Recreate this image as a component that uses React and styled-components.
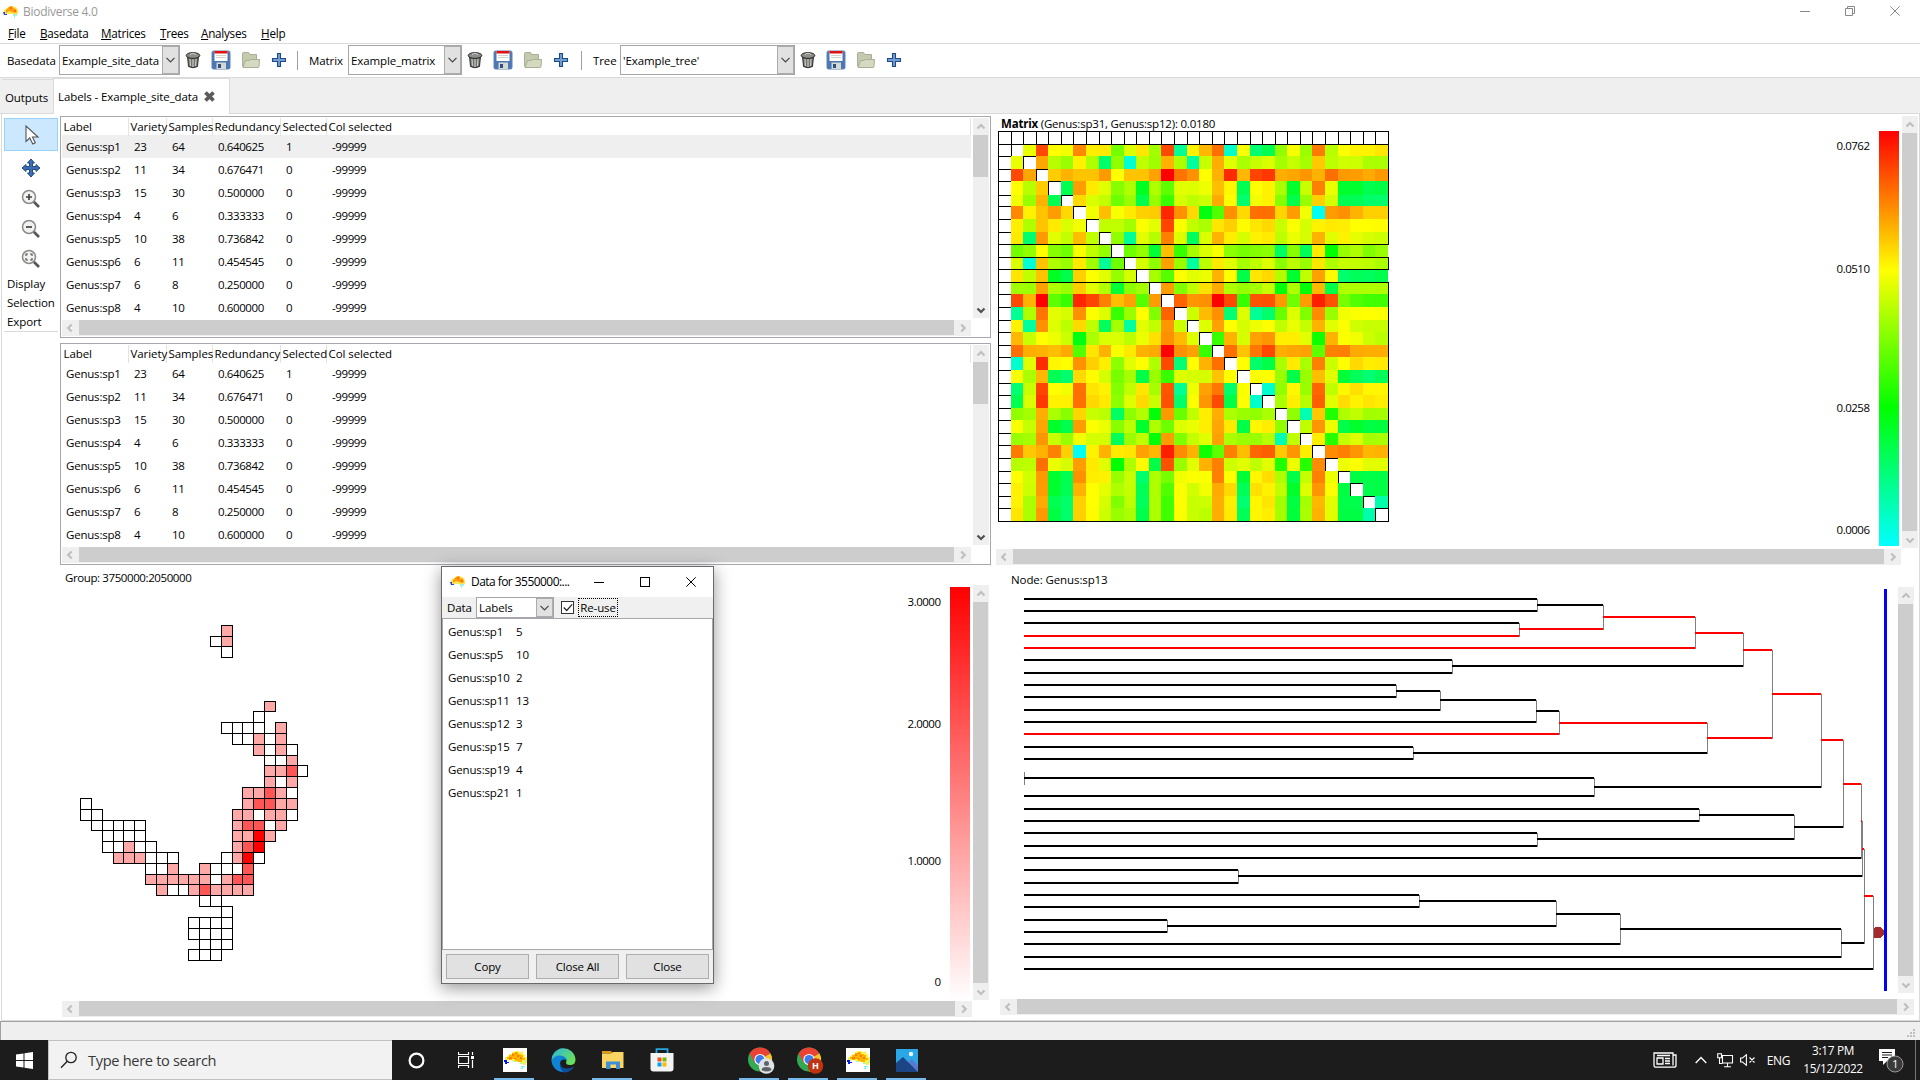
import React from "react";
import styled, { createGlobalStyle, css } from "styled-components";

const Global = createGlobalStyle`
  * { box-sizing: border-box; }
  html, body { margin: 0; padding: 0; background: #fff; overflow: hidden; }
  body, svg text {
    font-family: "Open Sans", "Noto Sans", sans-serif;
    font-size: 11.5px;
    letter-spacing: -0.1px;
    color: #000;
  }
  svg { display: block; flex: none; }
  svg text { letter-spacing: -0.5px; }
`;

/* ---------- data ---------- */

const SPECIES = [
  ["Genus:sp1", "23", "64", "0.640625", "1"],
  ["Genus:sp2", "11", "34", "0.676471", "0"],
  ["Genus:sp3", "15", "30", "0.500000", "0"],
  ["Genus:sp4", "4", "6", "0.333333", "0"],
  ["Genus:sp5", "10", "38", "0.736842", "0"],
  ["Genus:sp6", "6", "11", "0.454545", "0"],
  ["Genus:sp7", "6", "8", "0.250000", "0"],
  ["Genus:sp8", "4", "10", "0.600000", "0"],
].map((r) => [...r, "-99999"]);

const COLUMNS = ["Label", "Variety", "Samples", "Redundancy", "Selected", "Col selected"];

const GROUP_DATA = [
  ["Genus:sp1", 5], ["Genus:sp5", 10], ["Genus:sp10", 2], ["Genus:sp11", 13],
  ["Genus:sp12", 3], ["Genus:sp15", 7], ["Genus:sp19", 4], ["Genus:sp21", 1],
];

/* Upper triangle of the symmetric matrix; each value is a hue in degrees. */
const MATRIX = [
  "65 17 60 63 32 56 55 93 69 54 82 17 155 57 43 26 168 62 147 139 86 62 84 29 77 61 57 57 54",
  "39 77 84 57 79 146 86 170 75 83 42 79 158 73 41 67 80 73 69 81 74 81 47 76 71 72 80 80",
  "48 42 46 46 36 60 46 46 38 0 27 34 60 42 10 43 16 13 41 39 35 42 26 36 37 40 36",
  "139 37 55 67 88 79 128 79 98 67 68 64 45 58 140 60 57 80 130 73 30 65 131 131 139 136",
  "51 69 74 94 84 138 84 107 70 76 72 40 60 146 63 57 88 138 84 49 70 139 140 145 145",
  "63 45 62 55 49 48 9 34 51 124 101 34 51 26 26 50 37 63 177 37 34 42 49 49",
  "75 75 82 61 67 16 61 75 80 54 49 59 54 51 73 61 70 57 55 56 60 60 59",
  "86 156 67 78 30 68 142 69 42 56 70 57 55 76 65 70 42 67 57 66 70 72",
  "94 85 133 45 107 81 69 62 87 92 89 87 143 88 141 55 120 84 79 90 84",
  "70 87 38 84 158 76 55 67 81 75 68 87 76 84 54 79 73 74 76 80",
  "81 100 60 67 65 42 60 137 54 51 78 131 75 38 59 146 141 142 138",
  "37 90 75 53 40 79 84 81 73 122 79 122 43 137 79 79 79 79",
  "23 35 34 0 17 107 20 19 36 94 37 7 19 92 101 105 105",
  "72 44 34 148 68 155 145 95 68 90 33 84 63 61 60 61",
  "68 38 60 70 64 61 75 65 74 42 67 61 71 73 73",
  "107 42 70 38 35 56 56 67 117 42 61 63 72 76",
  "26 46 28 17 41 39 38 98 30 30 40 41 41",
  "60 145 137 80 55 80 30 72 60 51 56 55",
  "61 60 84 137 84 45 67 133 141 147 141",
  "168 86 58 84 24 75 58 53 58 58",
  "80 56 77 22 67 52 57 54 56",
  "86 162 47 113 79 75 82 81",
  "75 35 64 137 130 136 134",
  "56 111 74 68 81 80",
  "33 30 35 43 42",
  "64 61 67 67",
  "136 137 136",
  "138 136",
  "160",
].map((r) => r.split(" ").map(Number));

const hueAt = (r, c) => {
  const a = Math.min(r, c);
  const b = Math.max(r, c);
  return MATRIX[a - 1][b - a - 1];
};

/* Cell edges of the 31 x 31 grid, in thirds of a pixel from the canvas corner. */
const EDGES = [24, 63, 99, 138, 174, 214, 249, 288, 327, 363, 402, 438, 477, 513, 552, 591, 627, 666, 702, 741, 780, 816, 855, 891, 930, 966, 1005, 1044, 1080, 1119, 1155, 1194];
const MX = EDGES.map((v) => Math.round(990 + v / 3));
const MY = EDGES.map((v) => Math.round(123.3 + v / 3));

const MAP_X = [80, 91, 102, 113, 123, 134, 145, 156, 167, 178, 188, 199, 210, 221, 232, 242, 253, 264, 275, 286, 297, 307];
const MAP_Y = { 0: 625, 1: 636, 2: 646, 7: 701, 8: 711, 9: 722, 10: 733, 11: 744, 12: 755, 13: 765, 14: 776, 15: 787, 16: 798, 17: 809, 18: 820, 19: 830, 20: 841, 21: 852, 22: 863, 23: 874, 24: 884, 25: 895, 26: 906, 27: 917, 28: 928, 29: 939, 30: 949 };
/* row: "startColumn:cells"; w = 0, p = 1, r = 2, R = 3 shared labels */
const MAP_ROWS = {
  0: ["13:p"], 1: ["12:wp"], 2: ["13:w"], 7: ["17:p"], 8: ["16:w"],
  9: ["13:wwww", "18:p"], 10: ["14:wwpwp"], 11: ["16:pwpw"], 12: ["17:wwp"],
  13: ["17:pprw"], 14: ["17:pwp"], 15: ["15:pprpw"], 16: ["0:w", "15:prrpp"],
  17: ["0:ww", "14:ppwppw"], 18: ["1:wwwww", "14:prrwp"], 19: ["2:wwww", "14:ppRp"],
  20: ["2:wwpww", "14:prR"], 21: ["3:pppwww", "13:wpRw"], 22: ["6:wwp", "11:pwwwr"],
  23: ["6:ppppppwprr"], 24: ["7:pwwprpppp"], 25: ["11:ww"], 26: ["13:w"],
  27: ["10:wwww"], 28: ["10:wwww"], 29: ["11:www"], 30: ["10:www"],
};
const MAP_FILL = { w: "#fff", p: "#ffa8a8", r: "#ff5555", R: "#ff0000" };

/* Tree branches: [x from, x to, y, is highlighted] */
const L = (z) => 1000 + z / 3;
const R = (z) => 1440 + z / 3;
const LEAF = 1024;
const BRANCHES = [
  [LEAF, R(292), 117], [LEAF, R(292), 153], [LEAF, R(238), 189], [LEAF, R(238), 228, 1],
  [LEAF, R(766), 264, 1], [LEAF, R(37), 300], [LEAF, R(37), 339], [LEAF, L(1189), 375],
  [LEAF, L(1189), 411], [LEAF, L(1321), 450], [LEAF, R(289), 486], [LEAF, R(358), 522, 1],
  [LEAF, L(1240), 561], [LEAF, L(1240), 597], [LEAF, R(463), 654], [LEAF, R(463), 708],
  [LEAF, R(778), 747], [LEAF, R(778), 783], [LEAF, R(292), 819], [LEAF, R(292), 858],
  [LEAF, R(1264), 894], [LEAF, L(715), 930], [LEAF, L(715), 969], [LEAF, L(1258), 1005],
  [LEAF, L(1258), 1041], [LEAF, L(502), 1080], [LEAF, L(502), 1116], [LEAF, R(541), 1152],
  [LEAF, R(1204), 1191], [LEAF, R(1300), 1227],
  [R(292), R(490), 135], [R(238), R(490), 207, 1], [R(490), R(766), 171, 1],
  [R(766), R(910), 219, 1], [R(37), R(910), 318], [R(910), R(997), 270, 1],
  [L(1189), L(1321), 393], [L(1321), R(289), 420], [R(289), R(358), 453],
  [R(358), R(802), 489, 1], [L(1240), R(802), 579], [R(802), R(997), 534, 1],
  [R(997), R(1144), 402, 1], [R(463), R(1144), 681], [R(1144), R(1210), 540, 1],
  [R(778), R(1063), 765], [R(292), R(1063), 837], [R(1063), R(1210), 801],
  [R(1210), R(1264), 672, 1], [R(1264), R(1267), 783, 1], [L(715), R(1267), 948],
  [R(1267), R(1273), 867, 1], [L(1258), R(349), 1023], [L(502), R(349), 1098],
  [R(349), R(541), 1062], [R(541), R(1204), 1107], [R(1204), R(1273), 1149],
  [R(1273), R(1300), 1008, 1],
];
const JOINTS = [
  [R(292), 117, 153], [R(238), 189, 228], [R(490), 135, 207], [R(766), 171, 264],
  [R(37), 300, 339], [R(910), 219, 318], [L(1189), 375, 411], [L(1321), 393, 450],
  [R(289), 420, 486], [R(358), 453, 522], [L(1240), 561, 597], [R(802), 489, 579],
  [R(997), 270, 534], [LEAF + 0.3, 636, 672], [R(463), 654, 708], [R(1144), 402, 681],
  [R(778), 747, 783], [R(292), 819, 858], [R(1063), 765, 837], [R(1210), 540, 801],
  [R(1264), 672, 894], [L(715), 930, 969], [R(1267), 783, 948], [L(1258), 1005, 1041],
  [L(502), 1080, 1116], [R(349), 1023, 1098], [R(541), 1062, 1152],
  [R(1204), 1107, 1191], [R(1273), 867, 1149], [R(1300), 1008, 1227],
];

/* ---------- shell ---------- */

const Desktop = styled.div`
  width: 1920px; height: 1080px; display: flex; flex-direction: column;
  background: #fff; overflow: hidden; position: relative; white-space: nowrap;
`;
const TitleBar = styled.header`
  height: 23px; display: flex; align-items: center; padding: 0 0 0 2px; color: #999;
  font-size: 12px; letter-spacing: -0.28px;
`;
const AppTitle = styled.span`flex: 1; padding-left: 4px; line-height: 16px;`;
const WindowButtons = styled.div`display: flex; gap: 35px; padding: 0 20px 2px 0; align-items: center;`;
const MenuBar = styled.nav`
  height: 21px; border-bottom: 1px solid #dadada; display: flex; align-items: center;
  padding: 1px 0 0 8px; font-size: 11.7px; letter-spacing: -0.25px;
`;
const MenuItem = styled.span`
  width: ${(p) => p.$w}px; line-height: 17px;
  &::first-letter { text-decoration: underline; }
`;
const ToolBar = styled.div`
  height: 34px; border-bottom: 1px solid #dadada; display: flex; align-items: center; padding: 0 0 1px 7px;
`;
const ToolLabel = styled.span`width: ${(p) => p.$w}px; line-height: 18px; padding-top: 1px; flex: none;`;
const ComboBox = styled.div`
  width: ${(p) => p.$w}px; height: ${(p) => p.$h || 30}px; border: 1px solid #a5a5aa;
  display: flex; align-items: stretch; background: #fff; flex: none;
`;
const ComboText = styled.span`flex: 1; display: flex; align-items: center; padding-left: 2px;`;
const ComboArrow = styled.span`
  width: 17px; background: #e1e1e1; border: 1px solid #acacac; display: flex; align-items: center; justify-content: center;
`;
const IconSlot = styled.span`
  width: ${(p) => p.$w}px; display: flex; justify-content: center; align-items: center; flex: none;
`;
const Divider = styled.span`width: 1px; height: 19px; background: #a0a0a0; margin: 0 11px 0 ${(p) => p.$l}px; flex: none;`;

const TabStrip = styled.div`
  height: 36px; background: #efefef; border-bottom: 1px solid #dadada; display: flex; align-items: flex-end; padding-left: 2px;
`;
const Tab = styled.div`
  display: flex; align-items: center; flex: none;
  ${(p) => p.$active ? css`
    height: 36px; width: 177px; background: #fff; border: 1px solid #dadada; border-bottom: 0;
    margin-bottom: -1px; padding: 0 0 0 4px; gap: 5px;
  ` : css`
    height: 34px; width: 51px; border-top: 1px solid #dadada; padding: 1px 0 0 3px;
  `}
`;

const Workspace = styled.main`
  height: 907px; display: flex; border-left: 1px solid #dadada; border-right: 1px solid #dadada;
  border-bottom: 1px solid #dadada; margin-left: 1px;
`;
const Sidebar = styled.aside`width: 58px; padding: 4px 0 0 2px; display: flex; flex-direction: column; align-items: flex-start;`;
const SideTool = styled.div`
  width: 54px; height: ${(p) => p.$h || 30}px; display: flex; align-items: center; justify-content: center;
  ${(p) => p.$on && css`background: #cce8ff; border: 1px solid #99d1ff; padding-left: 2px;`}
`;
const SideMenu = styled.span`height: 19px; line-height: 19px; padding-left: 3px;`;
const SideRule = styled.span`width: 54px; height: 1px; background: #dadada;`;

const LeftPane = styled.section`width: 931px; padding-top: 2px; display: flex; flex-direction: column;`;
const RightPane = styled.section`flex: 1; display: flex; flex-direction: column;`;

/* ---------- scroll bars ---------- */

const Track = styled.div`
  background: #efefef; display: flex; flex: none;
  flex-direction: ${(p) => (p.$vertical ? "column" : "row")};
  width: ${(p) => (p.$vertical ? "16px" : `${p.$len}px`)};
  height: ${(p) => (p.$vertical ? `${p.$len}px` : "16px")};
`;
const TrackArrow = styled.span`
  width: ${(p) => (p.$vertical ? 15 : 17)}px; height: ${(p) => (p.$vertical ? 17 : 15)}px;
  display: flex; align-items: center; justify-content: center;
`;
const Thumb = styled.span`
  background: #cdcdcd;
  ${(p) => p.$vertical ? css`width: 15px; height: ${p.$size}px;` : css`height: 15px; width: ${p.$size}px;`}
`;
const Spacer = styled.span`flex: 1;`;

const ARROWS = {
  up: "M1.5 6.5 L5 3 L8.5 6.5", down: "M1.5 3.5 L5 7 L8.5 3.5",
  left: "M5.7 1.5 L2.2 5 L5.7 8.500", right: "M3.2 1.5 L6.7 5 L3.2 8.5",
};
const Arrow = ({ dir, color = "#bfbfbf", w = 2.2 }) => (
  <svg width="10" height="10" viewBox="0 0 10 10"><path d={ARROWS[dir]} fill="none" stroke={color} strokeWidth={w} /></svg>
);
const ScrollBar = ({ vertical, len, thumb, endColor }) => (
  <Track $vertical={vertical} $len={len}>
    <TrackArrow $vertical={vertical}><Arrow dir={vertical ? "up" : "left"} /></TrackArrow>
    <Thumb $vertical={vertical} $size={thumb} />
    <Spacer />
    <TrackArrow $vertical={vertical}><Arrow dir={vertical ? "down" : "right"} color={endColor} /></TrackArrow>
  </Track>
);

/* ---------- tables ---------- */

const TableFrame = styled.div`
  height: 222px; border: 1px solid #a7a7ad; padding: 1px; margin-bottom: ${(p) => p.$gap}px;
  display: flex; flex-direction: column; gap: 2px; flex: none;
`;
const TableBody = styled.div`display: flex; gap: 2px; height: 200px;`;
const Grid = styled.div`width: 909px; overflow: hidden;`;
const Row = styled.div`
  display: grid; grid-template-columns: 67px 38px 46px 68px 46px 1fr; height: 23px;
  background: ${(p) => (p.$on ? "#efefef" : "#fff")};
`;
const HeadRow = styled(Row)`height: 17px;`;
const HeadCell = styled.span`padding-left: 1.5px; line-height: 18px; border-right: 1px solid #e3e3e3; letter-spacing: -0.08px;`;
const Cell = styled.span`
  line-height: 23px;
  padding-left: ${(p) => (p.$numeric ? 5 : 4)}px;
  letter-spacing: ${(p) => (p.$numeric ? "-0.4px" : "-0.2px")};
`;

const SpeciesTable = ({ gap, highlight }) => (
  <TableFrame $gap={gap}>
    <TableBody>
      <Grid>
        <HeadRow>{COLUMNS.map((c) => <HeadCell key={c}>{c}</HeadCell>)}</HeadRow>
        {SPECIES.map((r, i) => (
          <Row key={r[0]} $on={highlight && i === 0}>
            {r.map((v, j) => <Cell key={j} $numeric={j > 0}>{v}</Cell>)}
          </Row>
        ))}
      </Grid>
      <ScrollBar vertical len={200} thumb={42} endColor="#505050" />
    </TableBody>
    <ScrollBar len={909} thumb={875} />
  </TableFrame>
);

/* ---------- plots ---------- */

const Plot = styled.div`display: flex; gap: ${(p) => p.$gap ?? 1}px;`;
const PlotColumn = styled.div`display: flex; flex-direction: column;`;
const MapPane = styled.div`height: 455px; padding: 4px 0 0 2px; display: flex; flex-direction: column;`;
const MatrixPane = styled.div`height: 452px; padding: 2px 0 0 5px; display: flex; flex-direction: column;`;
const TreePane = styled.div`height: 453px; padding: 5px 0 0 9px; display: flex; flex-direction: column;`;
const PlotLabel = styled.div`
  height: ${(p) => p.$h}px; line-height: ${(p) => p.$lh || 17}px; padding-left: ${(p) => p.$x}px;
  letter-spacing: ${(p) => p.$ls || -0.1}px;
`;
const BottomBar = styled.div`margin-top: ${(p) => p.$top}px;`;

const Legend = ({ x, items }) => items.map(([y, t]) => <text key={t} x={x} y={y + 4} textAnchor="end">{t}</text>);

const MatrixPlot = () => {
  const cells = [];
  for (let r = 1; r <= 30; r++) {
    for (let c = 1; c <= 30; c++) {
      if (r === c) continue;
      cells.push(
        <rect key={`${r}-${c}`} x={MX[c]} y={MY[r]} width={MX[c + 1] - MX[c]} height={MY[r + 1] - MY[r]} fill={`hsl(${hueAt(r, c)} 100% 50%)`} />
      );
    }
  }
  return (
    <svg width="905" height="417" viewBox="996 131 905 417" shapeRendering="crispEdges">
      <defs>
        <linearGradient id="spectrum" x1="0" y1="0" x2="0" y2="1">
          <stop offset="0" stopColor="#f00" /><stop offset=".335" stopColor="#ff0" />
          <stop offset=".667" stopColor="#0f0" /><stop offset="1" stopColor="#0ff" />
        </linearGradient>
      </defs>
      {cells}
      <g fill="none" stroke="#000">
        {MX.slice(0, 31).map((x, i) => <path key={`h${i}`} d={`M${x + 0.5} 131V144M998 ${MY[i] + 0.5}H1011`} />)}
        {MX.slice(1, 31).map((x, k) => <path key={`d${k}`} d={`M${x + 0.5} ${MY[k + 2]}V${MY[k + 1] + 0.5}H${MX[k + 2]}`} />)}
        <path d={`M998.5 131V521.5H1388.5V${MY[12]}M1388.5 131V${MY[9]}M1388.5 ${MY[10]}V${MY[11]}M998 131.5H1389M998 144.5H1389`} />
        {[9, 10, 11, 12].map((i) => <path key={i} d={`M1011 ${MY[i] + 0.5}H1389`} />)}
      </g>
      <rect x="1879" y="131" width="20" height="415" fill="url(#spectrum)" />
      <Legend x={1869.5} items={[[146, "0.0762"], [269, "0.0510"], [408, "0.0258"], [530, "0.0006"]]} />
    </svg>
  );
};

const MapPlot = () => (
  <svg width="909" height="415" viewBox="62 585 909 415" shapeRendering="crispEdges">
    <defs>
      <linearGradient id="reds" x1="0" y1="0" x2="0" y2="1">
        <stop offset="0" stopColor="#f00" /><stop offset="1" stopColor="#fff" />
      </linearGradient>
    </defs>
    {Object.entries(MAP_ROWS).flatMap(([row, runs]) =>
      runs.flatMap((run) => {
        const [start, str] = run.split(":");
        return [...str].map((ch, k) => {
          const c = Number(start) + k;
          const x = MAP_X[c];
          const w = (MAP_X[c + 1] ?? x + 11) - x;
          const y = MAP_Y[row];
          const h = (MAP_Y[Number(row) + 1] ?? y + 11) - y;
          return <rect key={`${row}-${c}`} x={x + 0.5} y={y + 0.5} width={w} height={h} fill={MAP_FILL[ch]} stroke="#000" />;
        });
      })
    )}
    <rect x="950" y="587" width="20" height="413" fill="url(#reds)" />
    <Legend x={940.5} items={[[602, "3.0000"], [724, "2.0000"], [861, "1.0000"], [982, "0"]]} />
  </svg>
);

const TreePlot = () => (
  <svg width="898" height="406" viewBox="1000 587 898 406" shapeRendering="crispEdges">
    {JOINTS.map(([x, a, b], i) => (
      <path key={i} d={`M${Math.floor(x) + 0.5} ${560 + a / 3}V${561 + b / 3}`} stroke="#808080" />
    ))}
    {BRANCHES.map(([a, b, y, hot], i) => (
      <rect key={i} x={Math.floor(a)} y={Math.round(559 + y / 3)} width={Math.floor(b) - Math.floor(a)} height="2" fill={hot ? "#f00" : "#000"} />
    ))}
    <path d="M1874 928q2-1.500 4-1.500q5 0 6 5.500h1v1h-1q-1 5.500-6 5.500q-3 0-4-1Z" fill="#a52a2a" />
    <rect x="1884" y="589" width="3" height="402" fill="#00f" />
  </svg>
);

/* ---------- icons ---------- */

const RangeMap = ({ size }) => (
  <svg width={size} height={size} viewBox="0 0 24 24" shapeRendering="crispEdges">
    <rect width="24" height="24" fill="#fff" />
    <path d="M2 9h2V8h2V6h3V4h2V3h5v1h3V3h1v3h2v3h2v3h1v3h-2v2h-3v-2h-3v-1h-4v-1H9v-1H6v1H3v-1H2Z" fill="#fff04a" />
    <path d="M4 9h2V7h3V5h3V4h3v2h3v1h2v3h2v2h-3v2h-4v-1h-3v-2H9v1H6v-1H4Z" fill="#ffb400" />
    <path d="M9 6h2v2H9zM12 5h2v1h-2zM6 9h3v2H6zM14 7h2v2h-2zM17 9h2v2h-2zM11 10h2v1h-2z" fill="#ff7a00" />
    <path d="M2 10h1v2H2zM17 15h3v1h-3zM22 12h1v3h-1zM10 13h3v1h-3z" fill="#9dffb0" />
    <path d="M1 12h3v2h2v1H4v1H2v-2H1z" fill="#0018f0" />
    <path d="M18 18h4v1h-2v2h-2v-1h1v-1h-1z" fill="#6cf5ee" />
  </svg>
);
const MiniMap = () => (
  <svg width="16" height="13" viewBox="0 0 16 13">
    <path d="M1 5l3-2 3-2h3l4 2 1 3v3l-3 2-3-2H7L4 9 1 10Z" fill="#ffe45a" />
    <path d="M3 5l3-3 3-1 1 2 3 1 1 3-2 1-3-1-3-1-3 2Z" fill="#ff9d0a" />
    <path d="M7 2h2v2H7zM11 5h2v2h-2z" fill="#ff7200" />
    <path d="M0 7h2v2h2v1H1z" fill="#1b3ff0" />
    <path d="M10 9h4v2h-2v2h-1v-2h-1z" fill="#9ff3d8" />
  </svg>
);
const Trash = () => (
  <svg width="16" height="18" viewBox="0 0 16 18">
    <path d="M2.500 5h11l-1 10.500q-4.500 2.500-9 0Z" fill="#6f716d" stroke="#2b2d2a" />
    <path d="M5 8l.5 7M8 8v8M11 8l-.5 7" stroke="#c9cac6" strokeWidth="1.200" />
    <ellipse cx="8" cy="4.500" rx="6.800" ry="2.900" fill="#8b8d88" stroke="#222421" />
    <path d="M5 3.500q3-3 6 0" fill="none" stroke="#d8d8d4" />
  </svg>
);
const Save = () => (
  <svg width="20" height="20" viewBox="0 0 20 20">
    <rect x="1" y="1" width="18" height="18" rx="1.500" fill="#4b77b5" stroke="#5f82b5" />
    <rect x="3.500" y="1" width="13" height="10" fill="#fff" />
    <rect x="3.500" y="1" width="13" height="2.500" fill="#e01212" />
    <path d="M5 5.500h10M5 7.500h10" stroke="#d0d2ce" />
    <rect x="5.500" y="12.500" width="9.500" height="6.500" fill="#d6d8d4" />
    <rect x="7" y="14" width="3" height="4" fill="#2f4f80" />
  </svg>
);
const Folder = () => (
  <svg width="20" height="18" viewBox="0 0 20 18">
    <path d="M1.500 15.500V2.500q0-1 1-1h5l1.500 2h6.500v5" fill="#c3cbac" stroke="#a9ae98" />
    <path d="M2 16.500L4.500 9.500H8l1.500-1h9l-.5 7q0 1-1 1Z" fill="#d3dabf" stroke="#a9ae98" />
  </svg>
);
const Plus = () => (
  <svg width="16" height="16" viewBox="0 0 16 16">
    <path d="M6.500 1.500h3v5h5v3h-5v5h-3v-5h-5v-3h5Z" fill="#729fcf" stroke="#1f4a87" strokeWidth="1.100" />
  </svg>
);
const CloseX = () => (
  <svg width="13" height="13" viewBox="0 0 13 13"><path d="M2.500 2.500l8 8M10.500 2.500l-8 8" stroke="#5a5c58" strokeWidth="3.800" /></svg>
);
const Cursor = () => (
  <svg width="16" height="22" viewBox="0 0 16 22">
    <path d="M2 2v15.500l3.800-3.500 3 6 2.500-1.300-2.800-5.700H14Z" fill="#fff" stroke="#555" strokeWidth="1.100" />
  </svg>
);
const Move = () => (
  <svg width="20" height="20" viewBox="0 0 20 20">
    <path d="M10 1l3.500 4h-2v3.500H15v-2l4 3.500-4 3.500v-2h-3.500V15h2L10 19l-3.500-4h2v-3.500H5v2L1 10l4-3.500v2h3.500V5h-2Z" fill="#3f6fb0" stroke="#1f4a87" />
  </svg>
);
const Magnifier = ({ kind }) => (
  <svg width="20" height="20" viewBox="0 0 20 20">
    <path d="M12.500 12.500l5.500 5.500" stroke="#555" strokeWidth="2.600" />
    <circle cx="8" cy="8" r="6.500" fill="#f2f2f0" stroke="#8a8c88" strokeWidth="1.500" />
    {kind === "in" && <path d="M8 5v6M5 8h6" stroke="#444" strokeWidth="1.700" />}
    {kind === "out" && <path d="M5 8h6" stroke="#444" strokeWidth="1.700" />}
    {kind === "fit" && <path d="M5 7V5h2M9 5h2v2M11 9v2H9M7 11H5V9" fill="none" stroke="#555" strokeWidth="1.200" />}
  </svg>
);
const WinIcon = ({ kind, size = 10, color = "#000" }) => (
  <svg width={size} height={size} viewBox="0 0 10 10">
    {kind === "min" && <path d="M0 5.500h10" stroke={color} />}
    {kind === "max" && <rect x=".5" y=".5" width="9" height="9" fill="none" stroke={color} />}
    {kind === "restore" && <path d="M.5 2.500h7v7h-7ZM2.500 2.500v-2h7v7h-2" fill="none" stroke={color} />}
    {kind === "close" && <path d="M.3.3l9.400 9.400M9.700.3L.3 9.700" stroke={color} />}
  </svg>
);
const Chevron = () => (
  <svg width="9" height="6" viewBox="0 0 9 6"><path d="M.5.8l4 4 4-4" fill="none" stroke="#444" strokeWidth="1.200" /></svg>
);

const FileTools = () => (
  <>
    <IconSlot $w={26}><Trash /></IconSlot>
    <IconSlot $w={30}><Save /></IconSlot>
    <IconSlot $w={30}><Folder /></IconSlot>
    <IconSlot $w={26}><Plus /></IconSlot>
  </>
);

/* ---------- dialog ---------- */

const Dialog = styled.div`
  position: absolute; left: 441px; top: 566px; width: 273px; height: 418px; background: #f0f0f0;
  border: 1px solid #6a6a6a; box-shadow: 0 4px 16px rgba(0,0,0,.42); display: flex; flex-direction: column;
`;
const DialogTitle = styled.div`
  height: 30px; background: #fff; display: flex; align-items: center; padding: 0 17px 1px 8px; font-size: 12px; letter-spacing: -0.55px;
`;
const DialogName = styled.span`width: 128px; padding-left: 5px; flex: none;`;
const DialogButtons = styled.div`display: flex; flex: 1; justify-content: space-between; align-items: center;`;
const DialogTools = styled.div`height: 21px; display: flex; align-items: center; padding-left: 5px;`;
const CheckBox = styled.span`
  width: 13px; height: 13px; border: 1px solid #333; background: #fff; margin: 0 4px 0 7px; display: flex; align-items: center; justify-content: center;
`;
const Focused = styled.span`border: 1px dotted #000; height: 19px; line-height: 17px; width: 40px; text-align: center;`;
const DialogList = styled.div`height: 332px; background: #fff; border: 1px solid #a7a7ad; padding: 1px 0 0 5px; `;
const DialogRow = styled.div`display: grid; grid-template-columns: 68px 1fr; height: 23px; line-height: 23px; letter-spacing: -0.15px;`;
const DialogFooter = styled.div`display: flex; gap: 7px; padding: 4px 0 0 4px;`;
const PushButton = styled.button`
  width: 83px; height: 25px; border: 1px solid #adadad; background: #e1e1e1; padding: 0 0 1px; font: inherit; letter-spacing: -0.15px; color: #000;
`;

/* ---------- status and task bars ---------- */

const StatusBar = styled.footer`
  height: 19px; background: #efefef; border-top: 1px solid #a0a0a0; border-left: 1px solid #a0a0a0;
  display: flex; justify-content: flex-end; align-items: flex-end; padding: 0 4px 2px 0; flex: none;
`;
const TaskBar = styled.div`height: 40px; background: #1c1c1c; display: flex; align-items: stretch; color: #fff; flex: none;`;
const StartButton = styled.div`width: 48px; display: flex; align-items: center; justify-content: center;`;
const SearchBox = styled.div`
  width: 344px; background: #f2f2f2; border: 1px solid #c0c0c0; border-right: 0; display: flex; align-items: center; gap: 10px;
  padding-left: 11px; color: #383838; font-size: 14.6px; letter-spacing: -0.32px;
`;
const TaskApp = styled.div`
  width: 49px; display: flex; align-items: center; justify-content: center;
  ${(p) => p.$running && css`
    background: linear-gradient(#76b9ed, #76b9ed) 4px 100% / 40px 2px no-repeat;
  `}
`;
const Tray = styled.div`margin-left: auto; display: flex; align-items: center; color: #fff; padding-right: 4px;`;
const TraySlot = styled.span`
  width: ${(p) => p.$w}px; display: flex; justify-content: center; font-size: 12px; letter-spacing: -0.3px;
  padding-left: ${(p) => p.$nudge || 0}px;
`;
const Clock = styled.div`
  width: 72px; text-align: center; line-height: 18px; font-size: 11.8px; letter-spacing: -0.3px; padding-bottom: 2px;
`;
const DesktopEdge = styled.span`width: 1px; height: 40px; background: #777; margin-left: 6px;`;

const ChromeIcon = ({ badge, letter }) => (
  <svg width="27" height="27" viewBox="-1 0 27 27" overflow="visible">
    <circle cx="13" cy="12.500" r="12" fill="#34a853" />
    <path d="M13 12.500L2.600 6.500A12 12 0 0 1 23.400 6.500Z" fill="#ea4335" />
    <path d="M13 12.500L23.400 6.500A12 12 0 0 1 13 24.500Z" fill="#fbc02d" />
    <path d="M2.600 6.500L8 16L13 12.500V6.500Z" fill="#ea4335" />
    <circle cx="13" cy="12.500" r="5.600" fill="#fff" /><circle cx="13" cy="12.500" r="4.500" fill="#3b7ded" />
    <circle cx="19.500" cy="19" r="7.800" fill={badge} />
    {letter
      ? <text x="19.300" y="22.300" textAnchor="middle" style={{ fontSize: 9, fontWeight: 700, fill: "#fff" }}>{letter}</text>
      : <><circle cx="19.500" cy="16.500" r="2.500" fill="#5f6368" /><path d="M14.500 23q0-3 5-3t5 3q-5 3-10 0Z" fill="#5f6368" /></>}
  </svg>
);
const EdgeIcon = () => (
  <svg width="25" height="25" viewBox="0 0 25 25">
    <defs>
      <linearGradient id="edgeTop" x1="0" y1="0" x2="1" y2=".6"><stop offset="0" stopColor="#28b4e8" /><stop offset="1" stopColor="#6be05a" /></linearGradient>
    </defs>
    <path d="M.5 13A12 12 0 0 1 24.500 11.500Q24.500 17 19 17Q15 17 15 14.500Q17 10 11 8.500Q4 8 .5 13Z" fill="url(#edgeTop)" />
    <path d="M.5 13Q3 7 9.500 7.500Q15.500 8.500 15.500 12Q10 10 9 15Q9 21 15 23.800A12 12 0 0 1 .5 13Z" fill="#0f84d6" />
    <path d="M9 15Q9.500 20.500 16 20.500Q20 20.500 23 18.500Q20 24.500 12.500 24.500Q8 20 9 15Z" fill="#0d4f9e" />
  </svg>
);
const ExplorerIcon = () => (
  <svg width="22" height="20" viewBox="0 0 22 20">
    <path d="M0 1h9l1.500 2.500H0Z" fill="#dd9a1a" /><path d="M0 3.500H9L11 2h10.500v16H0Z" fill="#fcd462" />
    <path d="M4 11.500h14V19h-4v-4.500H8.500V19H4Z" fill="#3f8fd6" />
  </svg>
);
const StoreIcon = () => (
  <svg width="24" height="24" viewBox="0 0 24 24">
    <path d="M6.500 5V1.200h11V5" fill="none" stroke="#26a9e0" strokeWidth="1.800" />
    <path d="M.5 5h23v15.500q0 3-3 3h-17q-3 0-3-3Z" fill="#f3f3f3" />
    <path d="M7.500 9.500h4v4h-4z" fill="#f25022" /><path d="M12.500 9.500h4v4h-4z" fill="#7fba00" />
    <path d="M7.500 14.500h4v4h-4z" fill="#00a4ef" /><path d="M12.500 14.500h4v4h-4z" fill="#ffb900" />
  </svg>
);
const PhotosIcon = () => (
  <svg width="22" height="23" viewBox="0 0 22 23">
    <rect width="22" height="23" fill="#2aa8e6" /><path d="M13 12l3-2 6 7v6H13Z" fill="#5b79d0" />
    <path d="M0 14l7-6 15 15H0Z" fill="#1b4585" /><circle cx="15" cy="5" r="2.200" fill="#e8f6ff" />
  </svg>
);
const TaskViewIcon = () => (
  <svg width="16" height="16" viewBox="0 0 16 16">
    <path d="M.5 0v2.500h10V0M.5 16v-2.500h10V16M.5 4.500h10v7H.5ZM14.500 0v3M14.500 8v8" fill="none" stroke="#fff" strokeWidth="1.200" />
    <path d="M13 4h3v3h-3z" fill="#fff" />
  </svg>
);

const App = () => (
  <Desktop>
    <Global />
    <TitleBar>
      <IconSlot $w={17}><MiniMap /></IconSlot>
      <AppTitle>Biodiverse 4.0</AppTitle>
      <WindowButtons>
        <WinIcon kind="min" color="#888" /><WinIcon kind="restore" color="#888" /><WinIcon kind="close" color="#888" />
      </WindowButtons>
    </TitleBar>
    <MenuBar>
      {[["File", 32], ["Basedata", 61], ["Matrices", 59], ["Trees", 41], ["Analyses", 60], ["Help", 40]].map(([t, w]) => (
        <MenuItem key={t} $w={w}>{t}</MenuItem>
      ))}
    </MenuBar>
    <ToolBar>
      <ToolLabel $w={52}>Basedata</ToolLabel>
      <ComboBox $w={121}><ComboText>Example_site_data</ComboText><ComboArrow><Chevron /></ComboArrow></ComboBox>
      <FileTools /><Divider $l={5} />
      <ToolLabel $w={39}>Matrix</ToolLabel>
      <ComboBox $w={114}><ComboText>Example_matrix</ComboText><ComboArrow><Chevron /></ComboArrow></ComboBox>
      <FileTools /><Divider $l={7} />
      <ToolLabel $w={27}>Tree</ToolLabel>
      <ComboBox $w={175}><ComboText>'Example_tree'</ComboText><ComboArrow><Chevron /></ComboArrow></ComboBox>
      <FileTools />
    </ToolBar>
    <TabStrip>
      <Tab>Outputs</Tab>
      <Tab $active>Labels - Example_site_data<CloseX /></Tab>
    </TabStrip>

    <Workspace>
      <Sidebar>
        <SideTool $on $h={33}><Cursor /></SideTool>
        <SideTool $h={33}><Move /></SideTool>
        <SideTool><Magnifier kind="in" /></SideTool>
        <SideTool><Magnifier kind="out" /></SideTool>
        <SideTool><Magnifier kind="fit" /></SideTool>
        <SideMenu>Display</SideMenu>
        <SideMenu>Selection</SideMenu>
        <SideMenu>Export</SideMenu>
        <SideRule />
      </Sidebar>

      <LeftPane>
        <SpeciesTable gap={5} highlight />
        <SpeciesTable gap={0} />
        <MapPane>
          <PlotLabel $h={16} $x={3} $ls={-0.4}>Group: 3750000:2050000</PlotLabel>
          <Plot $gap={2}><MapPlot /><ScrollBar vertical len={415} thumb={381} /></Plot>
          <BottomBar $top={1}><ScrollBar len={910} thumb={876} /></BottomBar>
        </MapPane>
      </LeftPane>

      <RightPane>
        <MatrixPane>
          <Plot>
            <PlotColumn>
              <PlotLabel $h={15} $x={5} $lh={15} $ls={-0.2}><b>Matrix</b> (Genus:sp31, Genus:sp12): 0.0180</PlotLabel>
              <MatrixPlot />
            </PlotColumn>
            <ScrollBar vertical len={432} thumb={398} />
          </Plot>
          <BottomBar $top={1}><ScrollBar len={905} thumb={871} /></BottomBar>
        </MatrixPane>
        <TreePane>
          <PlotLabel $h={16} $x={11}>Node: Genus:sp13</PlotLabel>
          <Plot $gap={0}><TreePlot /><ScrollBar vertical len={406} thumb={372} /></Plot>
          <BottomBar $top={6}><ScrollBar len={914} thumb={880} /></BottomBar>
        </TreePane>
      </RightPane>
    </Workspace>

    <StatusBar>
      <svg width="9" height="9" viewBox="0 0 9 9"><path d="M6 0h2v2H6zM6 3h2v2H6zM3 3h2v2H3zM6 6h2v2H6zM3 6h2v2H3zM0 6h2v2H0z" fill="#bfbfbf" /></svg>
    </StatusBar>

    <TaskBar>
      <StartButton>
        <svg width="17" height="17" viewBox="0 0 17 17"><path d="M0 2.500l7.500-1v6.500H0ZM8.500 1.300L17 0v8H8.500ZM0 9h7.500v6.500l-7.500-1ZM8.500 9H17v8l-8.500-1.300Z" fill="#fff" /></svg>
      </StartButton>
      <SearchBox>
        <svg width="18" height="18" viewBox="0 0 18 18"><circle cx="11" cy="6.500" r="5.200" fill="none" stroke="#222" strokeWidth="1.300" /><path d="M7.300 10.300L1 16.700" stroke="#222" strokeWidth="1.400" /></svg>
        Type here to search
      </SearchBox>
      <TaskApp>
        <svg width="17" height="17" viewBox="0 0 17 17"><circle cx="8.500" cy="8.500" r="6.900" fill="none" stroke="#fff" strokeWidth="2.200" /></svg>
      </TaskApp>
      <TaskApp><TaskViewIcon /></TaskApp>
      <TaskApp $running><RangeMap size={24} /></TaskApp>
      <TaskApp><EdgeIcon /></TaskApp>
      <TaskApp $running><ExplorerIcon /></TaskApp>
      <TaskApp><StoreIcon /></TaskApp>
      <TaskApp />
      <TaskApp $running><ChromeIcon badge="#dfe3e8" /></TaskApp>
      <TaskApp $running><ChromeIcon badge="#bf3310" letter="H" /></TaskApp>
      <TaskApp $running><RangeMap size={24} /></TaskApp>
      <TaskApp $running><PhotosIcon /></TaskApp>
      <Tray>
        <TraySlot $w={40} $nudge={9}>
          <svg width="24" height="16" viewBox="0 0 24 16"><path d="M20 3h3v10.500q0 1.700-2 1.700H3q-2 0-2-2V1h19v12.500M4 6h6v6H4ZM4 3.500h13M12 6.500h5M12 9h5M12 11.500h5" fill="none" stroke="#fff" strokeWidth="1.300" /></svg>
        </TraySlot>
        <TraySlot $w={32} $nudge={9}>
          <svg width="12" height="8" viewBox="0 0 12 8"><path d="M.7 7L6 1.500 11.300 7" fill="none" stroke="#fff" strokeWidth="1.300" /></svg>
        </TraySlot>
        <TraySlot $w={24} $nudge={2}>
          <svg width="17" height="15" viewBox="0 0 17 15"><path d="M5.500 2.500h10v7.500h-10ZM.7.700h3.800v4H.7ZM2.500 5v5.500h3M10.500 10v3.500M7 13.700h7" fill="none" stroke="#fff" strokeWidth="1.100" /></svg>
        </TraySlot>
        <TraySlot $w={23}>
          <svg width="16" height="12" viewBox="0 0 16 12"><path d="M.6 4h2L6.400.7v10.600L2.600 8h-2ZM9.500 3.500l5 5M14.500 3.500l-5 5" fill="none" stroke="#fff" strokeWidth="1.100" /></svg>
        </TraySlot>
        <TraySlot $w={38} $nudge={1}>ENG</TraySlot>
        <Clock>3:17 PM<br />15/12/2022</Clock>
        <TraySlot $w={40} $nudge={3}>
          <svg width="26" height="26" viewBox="0 0 26 26">
            <path d="M1 2h16v12h-8l-4 4v-4H1Z" fill="#fff" /><path d="M4 5.500h10M4 8h10M4 10.500h6" stroke="#1c1c1c" />
            <circle cx="17" cy="17" r="8" fill="#3a3a3a" stroke="#999" /><text x="17" y="21" textAnchor="middle" style={{ fill: "#fff" }}>1</text>
          </svg>
        </TraySlot>
        <DesktopEdge />
      </Tray>
    </TaskBar>

    <Dialog>
      <DialogTitle>
        <MiniMap />
        <DialogName>Data for 3550000:...</DialogName>
        <DialogButtons><WinIcon kind="min" /><WinIcon kind="max" /><WinIcon kind="close" /></DialogButtons>
      </DialogTitle>
      <DialogTools>
        <ToolLabel $w={29}>Data</ToolLabel>
        <ComboBox $w={78} $h={21}><ComboText>Labels</ComboText><ComboArrow><Chevron /></ComboArrow></ComboBox>
        <CheckBox><svg width="10" height="9" viewBox="0 0 10 9"><path d="M.8 4.500L3.700 7.500 9.200 1.300" fill="none" stroke="#222" strokeWidth="1.200" /></svg></CheckBox>
        <Focused>Re-use</Focused>
      </DialogTools>
      <DialogList>
        {GROUP_DATA.map(([n, v]) => <DialogRow key={n}><span>{n}</span><span>{v}</span></DialogRow>)}
      </DialogList>
      <DialogFooter>
        <PushButton>Copy</PushButton><PushButton>Close All</PushButton><PushButton>Close</PushButton>
      </DialogFooter>
    </Dialog>
  </Desktop>
);

export default App;
